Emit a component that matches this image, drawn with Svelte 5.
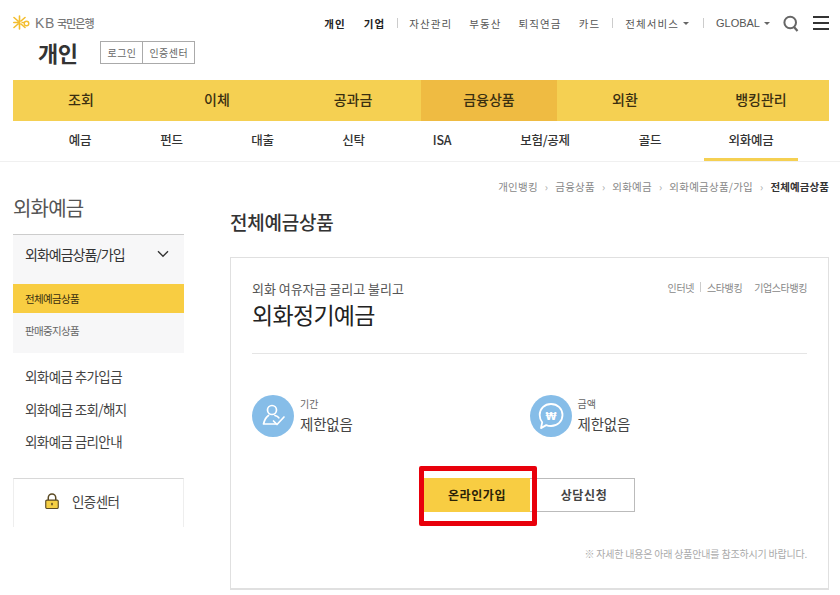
<script>
  const utility = ['자산관리', '부동산', '퇴직연금', '카드'];
  const mainNav = ['조회', '이체', '공과금', '금융상품', '외환', '뱅킹관리'];
  const subNav = ['예금', '펀드', '대출', '신탁', 'ISA', '보험/공제', '골드', '외화예금'];
  const crumbs = ['개인뱅킹', '금융상품', '외화예금', '외화예금상품/가입'];
  const sideLinks = ['외화예금 추가입금', '외화예금 조회/해지', '외화예금 금리안내'];
</script>

<div class="page">
  <header class="top">
    <div class="brand">
      <a class="logo">
        <svg width="20" height="15" viewBox="0 0 20 15" aria-hidden="true">
          <g stroke="#f3bd2e" stroke-width="1.6" stroke-linecap="round">
            <path d="M6.500 1v13M1 2.500l4 3.500M1 12.500l4-3.500M0.800 7.500h5M12 2.500L8 6M12 12.500L8 9" />
          </g>
          <circle cx="13.500" cy="8.500" r="2.300" fill="none" stroke="#f3bd2e" stroke-width="1.400" />
          <path d="M8.500 7.500h3" stroke="#f3bd2e" stroke-width="1.400" />
        </svg>
        <b class="kb">KB</b><span class="bank">국민은행</span>
      </a>
      <div class="title-row">
        <h1>개인</h1>
        <div class="auth"><span>로그인</span><span>인증센터</span></div>
      </div>
    </div>
    <nav class="utility">
      <a class="strong first">개인</a>
      <a class="strong second">기업</a>
      <i class="bar one"></i>
      <span class="plain-group">
        {#each utility as item}
          <a>{item}</a>
        {/each}
      </span>
      <i class="bar two"></i>
      <a class="drop service">전체서비스<em></em></a>
      <i class="bar three"></i>
      <a class="drop global">GLOBAL<em></em></a>
      <svg class="search" width="16" height="17" viewBox="0 0 16 17" aria-label="검색">
        <circle cx="7.200" cy="7.500" r="5.800" fill="none" stroke="#666" stroke-width="2" />
        <path d="M11 12l3.500 4" stroke="#666" stroke-width="2.200" />
      </svg>
      <span class="burger"><i></i><i></i><i></i></span>
    </nav>
  </header>

  <nav class="main-nav">
    {#each mainNav as item, i}
      <a class:on={i === 3}>{item}</a>
    {/each}
  </nav>

  <nav class="sub-nav">
    {#each subNav as item, i}
      <a class:on={i === 7}><span>{item}</span></a>
    {/each}
  </nav>

  <div class="body">
    <aside class="side">
      <h2>외화예금</h2>
      <div class="menu">
        <div class="menu-head">
          <span>외화예금상품/가입</span>
          <svg width="12" height="8" viewBox="0 0 12 8" aria-hidden="true">
            <path d="M1 1.200l5 5 5-5" fill="none" stroke="#333" stroke-width="1.400" />
          </svg>
        </div>
        <div class="menu-on">전체예금상품</div>
        <div class="menu-off">판매중지상품</div>
      </div>
      <ul class="links">
        {#each sideLinks as link}
          <li>{link}</li>
        {/each}
      </ul>
      <div class="cert">
        <svg width="14" height="16" viewBox="0 0 15 17" aria-hidden="true">
          <path d="M3.500 8V5a4 4 0 0 1 8 0v3" fill="none" stroke="#5b4a24" stroke-width="1.600" />
          <rect x="0.800" y="7.500" width="13.400" height="9" rx="1.200" fill="#f5cf45" stroke="#5b4a24" stroke-width="1.200" />
          <rect x="6.700" y="10.500" width="1.600" height="2.600" fill="#5b4a24" />
        </svg>
        <span>인증센터</span>
      </div>
    </aside>

    <main class="content">
      <div class="crumbs">
        {#each crumbs as crumb}
          <span>{crumb}</span><i>›</i>
        {/each}
        <b>전체예금상품</b>
      </div>
      <h2 class="page-title">전체예금상품</h2>

      <section class="card">
        <div class="card-top">
          <div>
            <p class="sub">외화 여유자금 굴리고 불리고</p>
            <h3>외화정기예금</h3>
          </div>
          <div class="channels"><span>인터넷</span><i></i><span>스타뱅킹</span><span class="gap">기업스타뱅킹</span></div>
        </div>

        <div class="stats">
          <div class="stat">
            <svg width="42" height="42" viewBox="0 0 42 42" aria-hidden="true">
              <circle cx="21" cy="21" r="21" fill="#86bde8" />
              <g fill="none" stroke="#fff" stroke-width="1.700" stroke-linejoin="round" stroke-linecap="round">
                <circle cx="20" cy="15" r="4.500" />
                <path d="M16.500 20.500C14 22 12.500 25 11.500 29h12" />
                <path d="M23 20.500c2 .6 3 1.300 3.800 2.300" />
                <path d="M21.500 26l3.500 3.500 7-7.500" />
              </g>
            </svg>
            <div class="stat-text"><small>기간</small><strong>제한없음</strong></div>
          </div>
          <div class="stat">
            <svg width="42" height="42" viewBox="0 0 42 42" aria-hidden="true">
              <circle cx="21" cy="21" r="21" fill="#86bde8" />
              <path d="M21 9c6.500 0 11.500 4.800 11.500 11s-5 11-11.500 11c-1.700 0-3.300-.3-4.800-.9l-5.200 3 1.200-5.800c-1.600-2-2.500-4.500-2.500-7.300 0-6.200 4.800-11 11.300-11z" fill="none" stroke="#fff" stroke-width="1.800" stroke-linejoin="round" />
              <text x="21" y="24.500" class="won">₩</text>
            </svg>
            <div class="stat-text"><small>금액</small><strong>제한없음</strong></div>
          </div>
        </div>

        <div class="actions">
          <a class="btn primary">온라인가입<span class="mark"></span></a>
          <a class="btn ghost">상담신청</a>
        </div>

        <p class="note">※ 자세한 내용은 아래 상품안내를 참조하시기 바랍니다.</p>
      </section>
    </main>
  </div>
</div>

<style>
  :global(body) {
    margin: 0;
    background: #fff;
  }
  .page {
    width: 840px;
    height: 595px;
    overflow: hidden;
    font-family: "Noto Sans CJK KR", "Noto Sans", sans-serif;
    color: #333;
  }
  a { color: inherit; text-decoration: none; }
  h1, h2, h3, p, ul { margin: 0; padding: 0; }

  .top {
    display: flex;
    justify-content: space-between;
    height: 80px;
    padding: 0 11px 0 13px;
  }
  .logo {
    display: flex;
    align-items: center;
    height: 15px;
    margin-top: 15px;
  }
  .kb {
    margin-left: 2px;
    font: 400 14px "Liberation Sans", sans-serif;
    color: #777;
    letter-spacing: 0.6px;
  }
  .bank {
    margin-left: 2px;
    font-size: 11px;
    font-weight: 500;
    color: #777;
    letter-spacing: -0.9px;
  }
  .title-row {
    display: flex;
    align-items: center;
    margin: 11px 0 0 25px;
  }
  h1 {
    font-size: 22px;
    line-height: 23px;
    font-weight: 700;
    color: #333;
    letter-spacing: -0.5px;
  }
  .auth {
    display: flex;
    margin-left: 23px;
    border: 1px solid #aaa;
    height: 21px;
    font-size: 10px;
    line-height: 21px;
    color: #666;
    letter-spacing: 0.45px;
  }
  .auth span { padding: 0 6px; }
  .auth span:first-child { border-right: 1px solid #aaa; }

  .utility {
    display: flex;
    align-items: center;
    height: 18px;
    margin-top: 14px;
    font-size: 10.500px;
    color: #555;
    letter-spacing: 1.1px;
  }
  .strong { font-weight: 700; color: #222; }
  .second { margin-left: 18px; }
  .bar {
    width: 1px;
    height: 10px;
    background: #ccc;
  }
  .bar.one { margin: 0 11px 0 12px; }
  .plain-group { display: flex; gap: 17px; }
  .bar.two { margin: 0 12px 0 12px; }
  .bar.three { margin: 0 12px 0 14px; }
  .service { letter-spacing: 1.1px; }
  .global { font-family: "Liberation Sans", sans-serif; letter-spacing: 0; font-size: 11px; }
  .drop { display: flex; align-items: center; }
  .drop em {
    margin-left: 4px;
    border: 3px solid transparent;
    border-top: 3px solid #666;
    border-bottom: 0;
  }
  .search { margin-left: 13px; }
  .burger {
    display: flex;
    flex-direction: column;
    gap: 4px;
    width: 16px;
    margin-left: 14px;
  }
  .burger i { display: block; height: 2px; background: #333; }

  .main-nav {
    display: grid;
    grid-template-columns: repeat(6, 136px);
    height: 41px;
    margin-left: 13px;
    width: 816px;
    background: #f5d052;
  }
  .main-nav a {
    font-size: 14px;
    font-weight: 500;
    line-height: 39px;
    text-align: center;
    color: #3a2f10;
  }
  .main-nav a.on { background: #efbb42; }

  .sub-nav {
    display: grid;
    grid-template-columns: 92px 91px 91px 91px 86px 120px 90px 112px;
    height: 40px;
    padding-left: 34px;
    border-bottom: 1px solid #f0f0f0;
  }
  .sub-nav a {
    display: flex;
    justify-content: center;
    font-size: 12.500px;
    font-weight: 500;
    color: #333;
    letter-spacing: -0.3px;
  }
  .sub-nav span {
    display: block;
    height: 37px;
    line-height: 37px;
    text-align: center;
  }
  .sub-nav a.on span {
    width: 94px;
    border-bottom: 3px solid #f5d052;
  }

  .body {
    display: flex;
    padding-left: 13px;
  }
  .side { width: 171px; }
  .side h2 {
    margin-top: 32px;
    font-size: 20px;
    line-height: 28px;
    font-weight: 400;
    color: #555;
    letter-spacing: -0.8px;
  }
  .menu {
    margin-top: 12px;
    height: 119px;
    background: #f7f7f8;
    border-top: 1px solid #ccc;
    box-sizing: border-box;
  }
  .menu-head {
    display: flex;
    align-items: center;
    justify-content: space-between;
    box-sizing: border-box;
    height: 49px;
    padding: 0 15px 11px 12px;
    font-size: 14px;
    color: #333;
    letter-spacing: -1px;
  }
  .menu-on {
    height: 29px;
    padding-left: 12px;
    background: #f8cd42;
    font-size: 10.500px;
    line-height: 29px;
    color: #3a2f10;
    letter-spacing: -0.65px;
  }
  .menu-off {
    padding: 8px 0 0 12px;
    font-size: 10.500px;
    line-height: 20px;
    color: #666;
    letter-spacing: -0.65px;
  }
  .links {
    list-style: none;
    margin-top: 7px;
    padding-left: 12px;
  }
  .links li {
    font-size: 13.500px;
    line-height: 32.500px;
    color: #444;
    letter-spacing: -0.6px;
  }
  .cert {
    display: flex;
    align-items: center;
    box-sizing: border-box;
    height: 49px;
    margin-top: 20px;
    padding: 0 0 4px 31px;
    border: 1px solid #eee;
    border-top-color: #d8d8d8;
    border-bottom: 0;
    font-size: 13.500px;
    color: #444;
    letter-spacing: -0.6px;
  }
  .cert span { margin-left: 13px; }

  .content {
    width: 599px;
    margin-left: 46px;
  }
  .crumbs {
    display: flex;
    justify-content: flex-end;
    align-items: center;
    height: 14px;
    margin-top: 17px;
    font-size: 10.500px;
    color: #888;
    letter-spacing: 0.25px;
  }
  .crumbs i {
    margin: 0 7px;
    font-style: normal;
    color: #aaa;
  }
  .crumbs b { font-weight: 700; color: #333; letter-spacing: 0.1px; }
  .page-title {
    margin-top: 14px;
    font-size: 19px;
    line-height: 30px;
    font-weight: 500;
    color: #333;
    letter-spacing: -0.25px;
  }
  .card {
    box-sizing: border-box;
    height: 333px;
    margin-top: 20px;
    padding: 0 21px;
    border: 1px solid #e0e0e0;
    border-bottom-width: 2px;
  }
  .card-top {
    display: flex;
    justify-content: space-between;
    height: 95px;
    border-bottom: 1px solid #e5e5e5;
  }
  .sub {
    margin-top: 21px;
    font-size: 13px;
    line-height: 20px;
    color: #555;
    letter-spacing: -0.03px;
  }
  h3 {
    margin-top: 0;
    font-size: 23px;
    line-height: 30px;
    font-weight: 400;
    color: #222;
    letter-spacing: -0.7px;
  }
  .channels {
    display: flex;
    align-items: center;
    height: 14px;
    margin-top: 22px;
    font-size: 10px;
    color: #888;
    letter-spacing: -0.4px;
  }
  .channels i {
    width: 1px;
    height: 10px;
    margin: 0 6px;
    background: #ccc;
  }
  .channels .gap { margin-left: 12px; }
  .stats {
    display: flex;
    margin-top: 41px;
  }
  .stat {
    display: flex;
    align-items: flex-start;
    width: 278px;
    height: 42px;
  }
  .stat-text {
    display: flex;
    flex-direction: column;
    margin: 2px 0 0 6px;
  }
  .stat small {
    font-size: 10px;
    line-height: 14px;
    color: #666;
  }
  .stat strong {
    font-size: 14.500px;
    line-height: 26px;
    font-weight: 400;
    color: #444;
    letter-spacing: -0.2px;
  }
  .won {
    font: 700 10px "DejaVu Sans", sans-serif;
    fill: #fff;
    text-anchor: middle;
  }
  .actions {
    display: flex;
    justify-content: center;
    margin-top: 41px;
  }
  .btn {
    box-sizing: border-box;
    display: block;
    height: 34px;
    line-height: 32px;
    font-size: 12px;
    font-weight: 700;
    text-align: center;
    letter-spacing: 0.6px;
  }
  .primary {
    position: relative;
    width: 106px;
    background: #f8cd42;
    color: #2a2208;
    line-height: 34px;
  }
  .mark {
    position: absolute;
    left: -5px;
    top: -12px;
    width: 118px;
    height: 60px;
    box-sizing: border-box;
    border: 5px solid #e8000b;
    border-radius: 2px;
  }
  .ghost {
    width: 105px;
    padding-left: 4px;
    border: 1px solid #bbb;
    border-left: 0;
    color: #444;
  }
  .note {
    margin-top: 35px;
    font-size: 10px;
    line-height: 14px;
    text-align: right;
    color: #aaa;
    letter-spacing: -0.2px;
  }
</style>
